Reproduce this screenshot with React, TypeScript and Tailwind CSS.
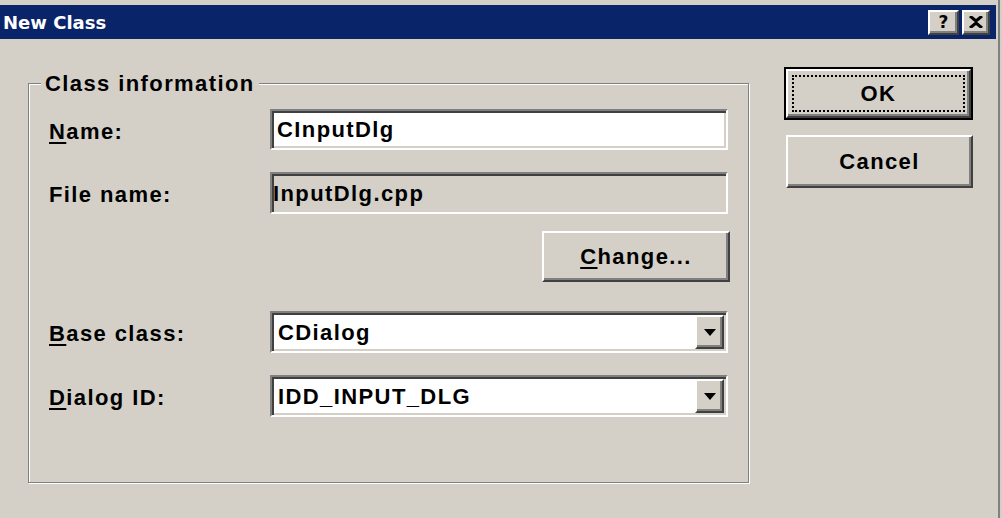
import React from "react";

const ui = "font-['Liberation_Sans',Arial,sans-serif] font-bold text-[22px] tracking-[1.4px] text-black";

// classic 3D bevels, doubled for the 2x screenshot
const raised =
  "bg-[#d4d0c8] border-2 border-t-white border-l-white border-r-[#404040] border-b-[#404040] shadow-[inset_-2px_-2px_0_#808080]";
const sunken =
  "border-2 border-t-[#808080] border-l-[#808080] border-r-white border-b-white shadow-[inset_2px_2px_0_#404040,inset_-2px_-2px_0_#d4d0c8]";

const Label = ({ text, hot }: { text: string; hot?: boolean }) => (
  <div className={`${ui} w-[221px] shrink-0 pt-[3px]`}>
    {hot ? (
      <>
        <span className="underline underline-offset-[3px] decoration-2">{text[0]}</span>
        {text.slice(1)}
      </>
    ) : (
      text
    )}
  </div>
);

const Combo = ({ value }: { value: string }) => (
  <div className={`${sunken} bg-white flex h-[42px] w-[458px]`}>
    <div className={`${ui} flex-1 flex items-center pl-[6px]`}>{value}</div>
    <div className={`${raised} w-[29px] m-[2px] ml-0 flex items-center justify-center`}>
      <svg width="12" height="7" viewBox="0 0 12 7">
        <path d="M0 0h12L6 7z" fill="#000" />
      </svg>
    </div>
  </div>
);

export default function App() {
  return (
    <div className="w-[1002px] h-[518px] bg-[#d4d0c8] overflow-hidden">
      <div className="w-[1000px] h-full border-r-2 border-[#808080] pr-[2px] pt-[5px] flex flex-col">
        {/* title bar */}
        <div className="h-[34px] bg-[#0a246a] flex items-center justify-between pl-[3px] pr-[6px]">
          <span className="font-['DejaVu_Sans',Verdana,sans-serif] font-bold text-[18px] text-white">
            New Class
          </span>
          <div className="flex gap-[3px]">
            <div className={`${raised} w-[31px] h-[25px] flex items-center justify-center`}>
              <span className="font-['DejaVu_Sans',Verdana,sans-serif] font-bold text-[17px] leading-none">?</span>
            </div>
            <div className={`${raised} w-[28px] h-[25px] flex items-center justify-center`}>
              <svg width="14" height="12" viewBox="0 0 14 12">
                <path d="M1 0l6 5 6-5M1 12l6-5 6 5" stroke="#000" strokeWidth="3" fill="none" />
              </svg>
            </div>
          </div>
        </div>

        <div className="flex">
          {/* group box */}
          <fieldset className="ml-[28px] mt-[32px] w-[721px] h-[412px] border border-[#808080] shadow-[inset_1px_1px_0_#fff,1px_1px_0_#fff] pl-[12px] pr-[19px]">
            <legend className={`${ui} leading-[25px] px-[4px] bg-[#d4d0c8]`}>Class information</legend>
            <div className="pl-[8px] pt-[13px] flex flex-col">
              <div className="flex items-center">
                <Label text="Name:" hot />
                <div className={`${sunken} bg-white h-[41px] w-[458px] flex items-center pl-[5px]`}>
                  <span className={ui}>CInputDlg</span>
                </div>
              </div>
              <div className="flex items-center mt-[22px]">
                <Label text="File name:" />
                <div className={`${sunken} bg-[#d4d0c8] h-[42px] w-[458px] flex items-center pl-[1px]`}>
                  <span className={ui}>InputDlg.cpp</span>
                </div>
              </div>
              <div className="flex justify-end mt-[17px]">
                <button className={`${raised} ${ui} w-[188px] h-[51px] mr-[-1px]`}>
                  <span className="underline underline-offset-[3px] decoration-2">C</span>hange...
                </button>
              </div>
              <div className="flex items-center mt-[29px]">
                <Label text="Base class:" hot />
                <Combo value="CDialog" />
              </div>
              <div className="flex items-center mt-[22px]">
                <Label text="Dialog ID:" hot />
                <Combo value="IDD_INPUT_DLG" />
              </div>
            </div>
          </fieldset>

          {/* buttons */}
          <div className="ml-[35px] mt-[28px] flex flex-col">
            <button className="w-[189px] h-[53px] border-2 border-black flex">
              <div className={`${raised} flex-1 flex p-[4px]`}>
                <div className={`${ui} flex-1 border-2 border-dotted border-black flex items-center justify-center`}>
                  OK
                </div>
              </div>
            </button>
            <button className={`${raised} ${ui} w-[187px] h-[53px] ml-[2px] mt-[15px]`}>Cancel</button>
          </div>
        </div>
      </div>
    </div>
  );
}
